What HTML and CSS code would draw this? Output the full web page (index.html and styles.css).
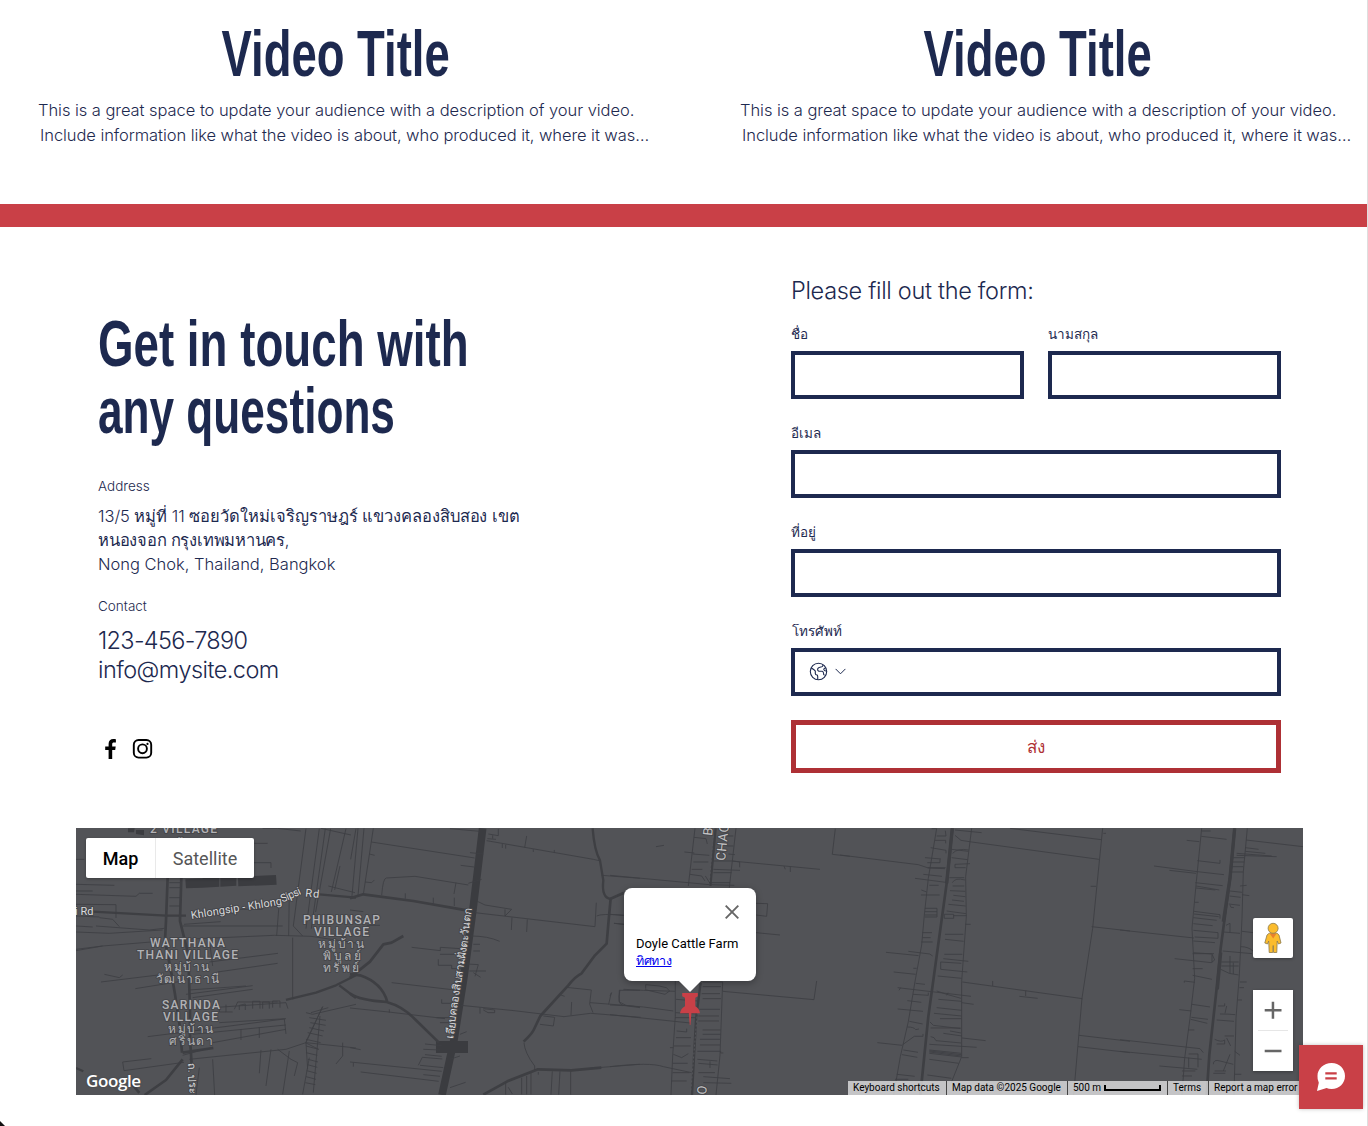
FILE: index.html
```html
<!DOCTYPE html>
<html lang="th">
<head>
<meta charset="utf-8">
<title>Doyle Cattle Farm</title>
<link rel="stylesheet" href="styles.css">
</head>
<body>
<div class="page">
  <section class="videos">
    <article class="video">
      <h2 class="video-title"><span class="condensed">Video Title</span></h2>
      <p class="video-line">This is a great space to update your audience with a description of your video.</p>
      <p class="video-line second">Include information like what the video is about, who produced it, where it was…</p>
    </article>
    <article class="video">
      <h2 class="video-title"><span class="condensed">Video Title</span></h2>
      <p class="video-line">This is a great space to update your audience with a description of your video.</p>
      <p class="video-line second">Include information like what the video is about, who produced it, where it was…</p>
    </article>
  </section>
  <div class="divider"></div>

  <section class="contact">
    <div class="details">
      <h1 class="heading"><span class="condensed left">Get in touch with</span><span class="condensed left second-line">any questions</span></h1>
      <p class="label address-label">Address</p>
      <p class="address"><span class="thai1">13/5 หมู่ที่ 11 ซอยวัดใหม่เจริญราษฎร์ แขวงคลองสิบสอง เขต</span><br><span class="thai2">หนองจอก กรุงเทพมหานคร,</span><br><span class="latin">Nong Chok, Thailand, Bangkok</span></p>
      <p class="label contact-label">Contact</p>
      <p class="reach"><span class="phone">123-456-7890</span><br><span class="mail">info@mysite.com</span></p>
      <div class="social">
        <svg width="24" height="24" viewBox="0 0 24 24"><path d="M14.200 22v-9h3l.5-3.600h-3.500V7.200c0-1 .4-1.700 1.800-1.700h1.900V2.200C17.500 2.100 16.500 2 15.300 2c-2.800 0-4.700 1.700-4.700 4.800v2.600H7.200V13h3.400v9z"/></svg>
        <svg width="24" height="24" viewBox="0 0 24 24" fill="none" stroke="#000" stroke-width="1.900"><rect x="3.800" y="3" width="17.400" height="17.600" rx="4.800"/><circle cx="12.500" cy="11.800" r="4.400"/><circle cx="17.500" cy="6.900" r="1.100" fill="#000" stroke="none"/></svg>
      </div>
    </div>

    <form class="form">
      <p class="form-title">Please fill out the form:</p>
      <div class="row">
        <label class="field"><span class="name">ชื่อ</span><span class="box"></span></label>
        <label class="field"><span class="name">นามสกุล</span><span class="box"></span></label>
      </div>
      <label class="field"><span class="name">อีเมล</span><span class="box"></span></label>
      <label class="field"><span class="name">ที่อยู่</span><span class="box"></span></label>
      <label class="field"><span class="name tel">โทรศัพท์</span>
        <span class="box phone-box">
          <svg width="19" height="19" viewBox="0 0 19 19" fill="none" stroke="#1d294f" stroke-width="1.100"><circle cx="9.500" cy="9.500" r="8.200"/><path d="M2.300 6q3.700 2 4 3.200v2.300q0 1.500 1.800 1.500.9.500.6 4.400M14 2.700q0 1.800-1.200 2-3.800.5-4.200 2.300-.2 1.800 1.200 2.200h3.400q1.300.5 1.300 1.800-.2 1.700 1 2.200M17.600 9.200q-2.500-.2-2.800-1.500-.2-1.500 1.800-1.700"/></svg>
          <svg width="11" height="7" viewBox="0 0 11 7" fill="none" stroke="#1d294f" stroke-width="1"><path d="M.6.9l4.900 4.900L10.400.9"/></svg>
        </span>
      </label>
      <button class="send" type="button">ส่ง</button>
    </form>
  </section>

  <section class="map">
    <svg class="roads" width="1227" height="267" viewBox="0 0 1227 267">
      <!-- western villages -->
      <g transform="translate(0 -2) scale(.3333)">
        <path class="fill" d="M328 160l52-3v28l-50 2zM380 156l50-2v28l-50 3zM433 154l48-2v27l-48 3zM486 152l114-5 2 29-115 5zM156 7h20l-2 12h-18zM180 12h24v16l-24-4z"/>
        <path class="main" d="M50 257l220 12h60M730 205l110 10M630 522l90-22 60-22 60-30M790 478l50 38M0 726l22 10"/>
        <path class="main w2" d="M275 155l-5 130-3 60 18 90 12 70 15 100 6 75M316 155l-4 130 25 100 5 170 0 80 5 80M320 700l-50 62-64 45M320 680l92-14M160 765l30 36"/>
        <path class="thin" d="M0 175l115 3M0 205l180 6 10-9h40M0 195h50M0 235l120 1v40M0 270l70 3M0 300l50 3M70 275l40 5 20 22M60 300l160 12 45-5M0 318l100 4 160-10M0 370l80-10 170-14M0 374l80-14M85 445l45 10 10-8M75 468l180-22M178 488l150-24M330 505l200-26M340 492l170-12M320 300h300M324 295l110-8M325 340l270-12 110 3 135 20M400 340l10 80M400 408l206-26M425 438l180-26M350 515l180-25M410 545l220-15 6 18M475 550l10-22h120M215 632l160-20M345 615l280-36 5 45M410 650l220-40M430 590l200-12M350 625l280-28M495 610v32M550 604v32M340 700l290-30 60-20 150 16M140 708l86-10M140 708l4 26 180-25M320 688l90-24M555 672l-5 70M585 670l-15 110M640 675l-20 130M605 670l40 30 20 10-10 40M690 650l5 80M690 560l20 5 130-30M650 335v185M610 225l-8 105M640 200l-2 130M690 8l-38 292 28 30M730 8l-40 300M748 8l-42 300M764 8l-45 250M810 8l-44 190M792 120l-16 72M535 52h40M490 45l40 8M530 110h55v16M560 7l44 0 70 8M0 100h25M45 120l200 8M280 170h32M280 185h32M280 215h32M280 240h32M410 250l150 0M690 650l50-108M705 560l52-15M740 542l-50 105M700 575l50 8M703 590l46 8M700 605l44 10M695 620l45 10M690 640l44 10M690 660l38 10M690 680l34 8M696 700l30 8M694 716l30 8M692 734l30 8M690 752l30 8M688 770l30 6M712 800l20-230M688 650l40 20M800 650v40l-20 24M680 805l20-110M370 725l-10 82M410 700l6 107M430 540v18h20M450 536v22h20M490 552v-14l18-4v18M530 548v-22h22v22M560 548v-20h20v20M590 545v-20h22v20M735 7l90 20M757 180l80 20"/>
      </g>
      <!-- khlong sip sam road -->
      <g transform="translate(274 -2) scale(.3333)">
        <path class="highway" d="M398 7l-28 235-28 210-30 190-36 165"/>
        <path class="fill" d="M258 645h96v36h-96z"/>
        <path class="main w2" d="M0 217l40-12 150 20 165 29M0 455l60-48 40-52 25-5 35-20M0 444l30 4q66 22 82 80M0 503q30 20 110 25 50 14 85 52l72 70M822 200l-40 18-6 65-6 70q-20 20-35 35l-40 54q-20 10-40 36l-84 92-20 42q-6 12-30 35M400 806l72-40 92-36 100 3 90-8"/>
        <path class="main" d="M728 7q5 66 22 96l10 60q-6 52 22 56"/>
        <path class="thin" d="M2 100L18 8M24 210L42 7M6 210L24 7M40 205L70 7M64 48l310 48M58 84l16 4M45 168l20 2 8-8M95 208q4-52 14-52l86-5 160 26M166 202v16M250 215v18M318 170l-6 34M313 215v25M300 8l90 8M332 118l40 5M360 80l40 4M395 160l-40 12M410 44l320 56 18 4M415 24l30 5v-20M428 28v10M457 54v12M467 56v12M530 30l-6 35M550 70v8M613 72v8M412 38l26 2M380 225l25 12 80 13-20 20v-20M375 260l360 42 4-72M486 274l-2 38M532 280l-2 38M740 270q14-8 82-2M792 292l30 3M755 148l115 9M0 252l40 5M50 298h40M185 364l86 10v-10l60 4M363 330q50 0 86 16M265 400v18h40v10h30M350 414l35 2-10 35M358 435h50M370 440l22 14M270 385h55M370 355h20M370 375h20M125 470l190 22M0 546l115 12 170 20M275 520v12h52M332 538l160 16 150 18 80-10 150 12M390 545v18M400 548l34 4v8h-20l-14-8M648 484l76 8-5 42 10 26M665 528l-2 40M580 570l34 4-4 26-40-5M632 507l12 4M720 530l90 7 60 8M784 500l-8 35M808 528v-35h62M808 528l20 10 42 5M522 650q2 30 32 70v12M720 727l150-12M0 708l275 28M10 710v12M32 738l234 28M0 665l32 6M205 718l12-24 60 5M210 718l70 7M225 654l50 5M220 670l50 2M225 686l50 5M220 746l50 5M330 625l20-8M300 700l30-10M300 785l47-16M467 770v36M475 784l12 20M515 755v50M530 750v55M543 740v65M607 736l-4 70M630 736l-4 70M662 736v70M565 738v8M118 550v10M300 575h-40M310 590h-40"/>
      </g>
      <!-- road beside the farm -->
      <g transform="translate(534 -2) scale(.3333)">
        <path class="main" d="M317 7L301 180M272 470l-14 110-12 227"/>
        <path class="dash" d="M309 30L297 180M262 560l-20 240"/>
        <path class="thin" d="M255 7L235 180M378 7l-20 178M196 465v105l-8 120-5 117M338 468l-8 220-12 119M0 148l298 28 75 2M138 62l24-4M223 78l30 3M248 84l50 4M250 108h45M252 34l36 4 4 16M245 130h32M240 145l35 5 10 15M286 150l14 22M310 130l80 3M310 105h55l265 25M367 105l22 3v16M522 120l4 10M541 122v16M355 84l20 2M350 60h20M370 30h-20M676 8l-9 77 53 6M437 232l36 1-3 38-32-4M438 320l72 7M310 140h55M300 170h60M107 488v-12l40 4 22 5 10 10-14 10-60-14M40 490l60 3 95 3M30 492q-10 44 10 46l60 5 90 12M0 537l40 2M0 566l240 25M0 722q120-14 160 0l85 18M278 468h60M278 482h55M275 503h55M278 518h55M338 496l274 25 8-56M268 550h62M265 570h62M265 585h62M278 612h54M278 625h54M270 640h60M270 657h60M262 676h70v5h8M262 700l60 5M265 712l58 5M300 706v20M265 740h50M280 752l80 6M280 770l84 2M198 520l64 5M196 560l65 4M195 575h60M200 615l30 3v-10M198 635h45M192 660h50M190 685l25 10 20-12M188 712h45M188 740h50M185 765h45M180 665h10M5 500l-5 10M12 292l30 3M0 265l40 3"/>
      </g>
      <!-- canal strip -->
      <g transform="translate(764 -2) scale(.3333)">
        <path class="main w2" d="M337 7l-17 165-55 400-24 235"/>
        <path class="canal" d="M337 7l-17 165"/>
        <path class="thin" d="M290 7l-25 150-12 110-8 90-20 110-20 120-24 105-20 115M395 7l-18 145 2 120-14 195v225l-32 80M0 87l235 29 30 10 50 2M510 7l274 34M395 48l382 52M788 7l-30 300-32 210-25 290M790 22h8M752 181h16M755 302l115 13M367 468l360 50M458 465v15M557 494v16M538 511l55 6M717 628l153 18M714 662l156 18M376 295h16M138 379l98 10M205 376l64 8 9 6M161 438l66 7M220 427h10M173 485l220 26M182 485l-5 8M202 524l42 5M173 549l76 7M112 650l74 8M225 157l92 12M188 656l35-25h26v-7M275 8h14M290 30h28l-2-16M285 43h32v9M272 65l46 8v9M255 95l48 4M262 110h38v-10M263 125h54M250 145l56 6M268 178h28M244 192l16 6M243 207h56M255 247h36v26h-36M255 257h36M255 267h36M247 320h29M247 335h25M244 348h34M227 472l28 3M219 505l46 3v-8M208 586l40 8M202 603q20 0 25 8l10-2M190 672l44 7M186 686l46 8M170 745l54 6M165 760h40M345 12l80 8M345 28l18 15 32 5M335 70l50 6M338 82q14-16 48-10M335 95l48 6M345 115l45-2M345 115v10h32M328 155h45M337 170q8-16 38-8M338 180h35M330 194l46 2M340 208l36 4M336 222l36 4M325 235l52 5M320 255l58 8M313 265h28v12h-28zM340 269h40M315 325h55M315 340l56 6M313 385h54M310 398l75 8M302 408l62 4M302 408v22l80 8M293 450l72 7M290 495l30 10 43 12M320 508l4-8M295 520l70 6M365 530l36 5M290 545l75 8M282 562l82 8M300 578h64M270 588l10 10 82 10M272 606h90M330 615l33 6M310 622l56 8M366 636l71 8M272 632q12 0 16 12l75 7M268 655l142 9M268 672l96 10M268 675l96 11M268 678l96 12M268 682l96 11M366 695h20M268 700l88 12M262 747l72 10"/>
      </g>
      <!-- eastern canal -->
      <g transform="translate(1044 -2) scale(.3333)">
        <path class="main w2" d="M344 7l-14 150-28 210-12 120-22 200-8 120"/>
        <path class="canal" d="M344 7l-14 150-20 130M302 380l-10 110"/>
        <path class="thin" d="M245 7l-16 160-13 140 8 150-14 120-16 120-8 110M382 7l-12 130-4 140-8 170-10 130-6 230M200 43l38 4M246 15h26M244 31l76 9M378 42l171 20M232 104l68 8v-10M102 120l130 17 80 9M148 133l80 9M226 170l82 9M228 180l70 12M228 186l58 6M224 229h12M222 256l78 10v12M222 264l74 8M220 275l70 8M220 293l58 6M220 313l74 7v17l-70-4M220 345l65 5M0 312l222 24M164 398l110 12 10-8-8-18-56-4M218 383h64M276 387v22M218 428h30M218 448l58 12M193 470v-5l32 4M216 535l54 8M178 551l36 4M214 574l50 6M212 580l50 12M205 612h18M0 641l240 27 10 12M0 676l245 24M118 720l114 10M206 684h28v40M206 695v30M186 735h40M186 750h30M340 95h34M338 108h34M336 122h34M332 138h38M376 65l40 5M376 76l60 6M350 88l120 4M350 82l105 8M330 195l36 4M328 210l34 4M366 206l22 3M326 234l34 4M330 237q0 10 12 8M318 298l12-6v28M310 318l50 4M366 316l34 4M308 375l88 8M362 362q24 0 38 14M304 408h52M304 420h52M330 390v52M340 410v34M302 430q25 16 54 17M360 468h20M358 485h14M354 522h12M294 540h20v-8M300 564q25 0 46 2M290 582l52 4M320 540l-5 22M314 630h28M284 640q20 10 30 2v12h-24M320 636l12 24M344 676l16 12M280 715q0-16 20-10l40 10M330 685l-20 50M284 735h34M280 742h36M344 745h20M360 180l20-2"/>
      </g>
      <!-- place names -->
      <g class="place">
        <text x="74" y="5" textLength="67">2 VILLAGE</text><text x="98" y="19" textLength="22">บ้าน</text>
        <text x="74" y="119" textLength="75">WATTHANA</text><text x="61" y="131" textLength="101">THANI VILLAGE</text><text x="88" y="143" textLength="45">หมู่บ้าน</text><text x="80" y="155" textLength="63">วัฒนาธานี</text>
        <text x="86" y="181" textLength="58">SARINDA</text><text x="87" y="193" textLength="55">VILLAGE</text><text x="92" y="205" textLength="45">หมู่บ้าน</text><text x="93" y="217" textLength="44">ศรินดา</text>
        <text x="227" y="96" textLength="77">PHIBUNSAP</text><text x="238" y="108" textLength="55">VILLAGE</text><text x="242" y="120" textLength="46">หมู่บ้าน</text><text x="247" y="132" textLength="38">พิบูลย์</text><text x="247" y="144" textLength="36">ทรัพย์</text>
      </g>
      <g class="street">
        <text x="-1" y="87">i Rd</text>
        <text transform="translate(115.500 91) rotate(-9)" textLength="92">Khlongsip - Khlong</text>
        <text transform="translate(206.500 74.500) rotate(-24)" textLength="21">Sipsi</text>
        <text transform="translate(229 68.500) rotate(6)" textLength="14">Rd</text>
        <text transform="translate(377 211) rotate(-81.500)" textLength="132">เลียบคลองสิบสามฝั่งตะวันตก</text>
        <text transform="translate(112 235) rotate(88)" textLength="31">ถ. ประ</text>
      </g>
      <g class="district">
        <text transform="translate(636 8) rotate(-84)">B</text>
        <text transform="translate(649 33) rotate(-84)" textLength="37">CHAO</text>
        <text transform="translate(630 267) rotate(-84)">O</text>
      </g>
    </svg>

    <div class="map-types"><span class="type active">Map</span><span class="type">Satellite</span></div>
    <div class="google">Google</div>

    <div class="bubble">
      <svg class="close" width="14" height="14" viewBox="0 0 14 14" stroke="#666" stroke-width="1.900"><path d="M.7.7l12.600 12.600M13.300.7L.7 13.300"/></svg>
      <p class="place-name">Doyle Cattle Farm</p>
      <a class="directions">ทิศทาง</a>
    </div>
    <svg class="pin" width="20" height="32" viewBox="0 0 20 32"><path fill="#c94047" d="M2.200 0h15.600v3.200l-2.500 1.500v8.500q4 2 4.700 7h-8.600L10.400 32h-.6l-1-11.800H0q.8-5 5-7V4.700L2.200 3.200z"/></svg>

    <div class="pegman"><svg width="18" height="32" viewBox="0 0 18 32"><path fill="#fbbc2d" stroke="#8c7a4d" stroke-width=".8" d="M5.200 11.200h7.800l2 1.800 2 8-2.500 1-1.300-3-.4 11.500H9.600l-.4-7-.4 7H5.200L4.700 19l-1.200 3-2.700-1 2.200-8z"/><path fill="#e8812d" d="M5.600 11.400h7L9.200 16.500z"/><circle cx="9.100" cy="6.300" r="5" fill="#fbbc2d" stroke="#8c7a4d" stroke-width=".8"/></svg></div>
    <div class="zoom">
      <svg width="40" height="81" viewBox="0 0 40 81"><path fill="#666" d="M11.700 18.900h7v-7.100h2.500v7.100h7.300v2.500h-7.300v7.400h-2.500v-7.400h-7zM11.700 59.800h16.800v2.500H11.700z"/><path fill="#e6e6e6" d="M5 40h30v1H5z"/></svg>
    </div>

    <div class="attribution">
      <span class="credit c1">Keyboard shortcuts</span><span class="credit c2">Map data ©2025 Google</span><span class="credit c3">500 m<i class="scale"></i></span><span class="credit c4">Terms</span><span class="credit c5">Report a map error</span>
    </div>
  </section>

  <div class="chat"><svg width="30" height="30" viewBox="0 0 30 30"><path fill="#fff" d="M15.600 1C23.400 1 29 6.700 29 14s-5.600 13-13.400 13c-2 0-3.700-.3-5-.9L1 29l1.800-8.300A12.700 12.700 0 0 1 1.500 14C1.500 6.700 7.800 1 15.600 1z"/><path fill="#c94047" d="M9.300 10.200h11.400v2.300H9.300zM9.300 15.200h11.400v2.300H9.300z"/></svg></div>
  <div class="corner"></div>
</div>
</body>
</html>
```
FILE: styles.css
```css
* { box-sizing: border-box; }
body { margin: 0; background: #fff; }
p, h1, h2 { margin: 0; font-weight: 300; }
.page {
  position: relative;
  width: 1368px;
  height: 1126px;
  overflow: hidden;
  border-right: 1px solid #dedede;
  color: #1d294f;
  font-family: Inter, "Liberation Sans", sans-serif;
  font-weight: 300;
}
.videos { display: grid; grid-template-columns: 702px 665px; height: 204px; padding-top: 21px; }
.video-title { width: 672px; height: 67px; margin-bottom: 10px; text-align: center; }
.condensed {
  display: inline-block;
  font: 700 64px/67px "Liberation Sans", Arial, sans-serif;
  white-space: nowrap;
  transform: scaleX(.71);
}
.condensed.left { display: block; transform-origin: 0 0; transform: scaleX(.714); }
.condensed.second-line { transform: scaleX(.69); }
.video-line { padding-left: 38px; font-size: 16.500px; line-height: 25px; letter-spacing: -.05px; white-space: nowrap; }
.video-line.second { padding-left: 40px; letter-spacing: -.07px; }
.divider { height: 23px; background: #c94047; }

.contact { display: flex; height: 601px; }
.details { width: 791px; padding: 84px 0 0 98px; }
.label { font-size: 13.500px; line-height: 20px; }
.address-label { margin: 31px 0 8px; }
.address { font-size: 16.500px; line-height: 24px; white-space: nowrap; }
.thai1 { letter-spacing: -.05px; }
.thai2 { letter-spacing: -.24px; }
.contact-label { margin: 20px 0 10px; }
.reach { font-size: 23.500px; line-height: 29px; }
.phone { letter-spacing: -.67px; }
.mail { letter-spacing: -.55px; }
.social { display: flex; gap: 8px; margin-top: 53px; }

.form { width: 490px; padding-top: 49px; }
.form-title { height: 30px; margin-bottom: 18px; font-size: 23.500px; line-height: 30px; letter-spacing: -.31px; white-space: nowrap; }
.row { display: flex; gap: 24px; }
.field { display: block; flex: 1; height: 75px; margin-bottom: 24px; }
.name { display: block; height: 27px; font-size: 13.500px; font-weight: 400; line-height: 20px; }
.name.tel { padding-left: 1px; }
.box { display: flex; height: 48px; border: 4px solid #1d294f; }
.phone-box { align-items: center; gap: 7px; padding: 0 0 1px 13.500px; }
.send {
  display: block;
  width: 490px;
  height: 53px;
  padding: 2px 0 0;
  border: 5px solid #ae3035;
  background: #fff;
  color: #ae3035;
  font: 300 17px/41px Inter, sans-serif;
}

.map { position: relative; width: 1227px; height: 267px; margin-left: 76px; background: #525357; overflow: hidden; font-family: Roboto, sans-serif; font-weight: 400; }
.roads { display: block; }
.roads path { fill: none; stroke: #3e3f43; stroke-linejoin: round; }
.roads .fill { fill: #3b3c40; stroke: none; }
.roads .thin { stroke-width: 2.600; }
.roads .main { stroke-width: 7; }
.roads .w2 { stroke-width: 8; }
.roads .highway { stroke-width: 23; stroke: #3b3c40; }
.roads .canal { stroke-width: 10; }
.roads .dash { stroke: #55565a; stroke-width: 3; stroke-dasharray: 6 6; }
.roads text { fill: #c3c3c5; paint-order: stroke; stroke: #45464a; stroke-width: 2px; stroke-linejoin: round; }
.place text { font-size: 12px; fill: #b2b2b5; font-weight: 500; }
.street text { font-size: 11px; fill: #dadadc; }
.district text { font-size: 13px; }

.map-types { position: absolute; left: 10px; top: 10px; display: flex; height: 40px; background: #fff; border-radius: 2px; box-shadow: 0 1px 3px rgba(0,0,0,.3); }
.type { width: 98px; text-align: center; font-size: 18px; line-height: 42px; color: #565656; }
.type.active { width: 70px; border-right: 1px solid #e9e9e9; font-weight: 500; color: #000; }
.google { position: absolute; left: 10px; top: 243px; color: #fff; font: 600 17px/20px "Open Sans", sans-serif; letter-spacing: -.4px; text-shadow: 0 0 2px #444; }

.bubble { position: absolute; left: 548px; top: 60px; width: 132px; height: 93px; padding: 48px 12px 0; background: #fff; border-radius: 8px; box-shadow: 0 2px 7px rgba(0,0,0,.3); font-size: 13px; line-height: 16px; color: #000; }
.bubble::after { content: ""; position: absolute; left: 54px; top: 92px; border: solid transparent; border-width: 12px 12px 0; border-top-color: #fff; }
.close { position: absolute; right: 17.500px; top: 17px; }
.place-name { margin-bottom: 1px; font-weight: 400; white-space: nowrap; }
.directions { display: block; width: max-content; font-size: 12.500px; letter-spacing: -.3px; color: #00e; text-decoration: underline; }
.pin { position: absolute; left: 604px; top: 165px; }
.pegman { position: absolute; left: 1177px; top: 90px; display: flex; align-items: center; justify-content: center; width: 40px; height: 40px; background: #fff; border-radius: 2px; box-shadow: 0 1px 3px rgba(0,0,0,.3); }
.zoom { position: absolute; left: 1177px; top: 162px; width: 40px; height: 81px; background: #fff; box-shadow: 0 1px 3px rgba(0,0,0,.3); }
.attribution { position: absolute; left: 772px; top: 253px; display: flex; width: 455px; height: 14px; font-size: 10px; line-height: 14px; color: #000; white-space: nowrap; }
.credit { padding-left: 5px; background: rgba(245,245,245,.7); border-right: 1px solid #444; }
.c1 { width: 99px; }
.c2 { width: 121px; }
.c3 { display: flex; align-items: center; width: 100px; }
.c4 { width: 41px; }
.c5 { width: 94px; border-right: 0; }
.scale { width: 57px; height: 6px; margin-left: 3px; border: solid #000; border-width: 0 2px 2px; }
.chat { position: absolute; left: 1299px; top: 1045px; display: flex; align-items: center; justify-content: center; width: 64px; height: 64px; background: #c94047; box-shadow: 0 0 4px rgba(0,0,0,.25); }
.corner { position: absolute; left: 0; top: 1121px; width: 5px; height: 5px; background: #111; clip-path: polygon(0 0, 100% 100%, 0 100%); }
```
